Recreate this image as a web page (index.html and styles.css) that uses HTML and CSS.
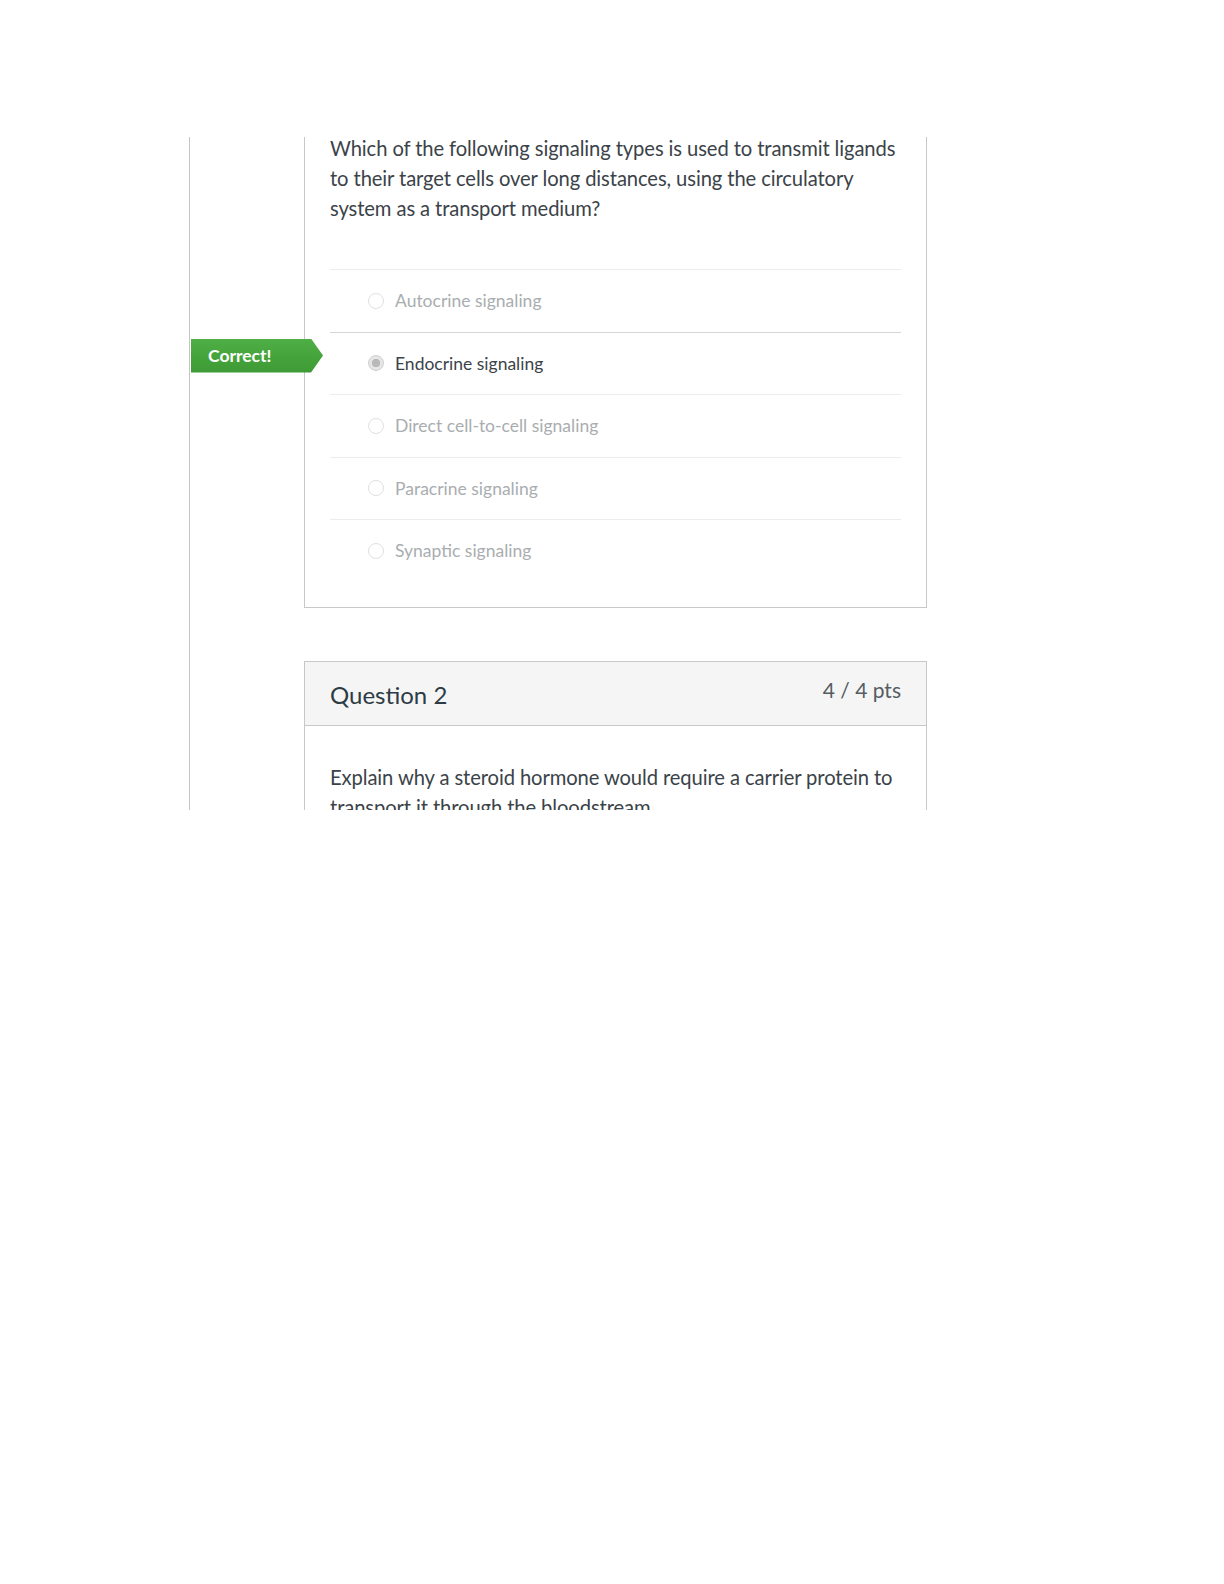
FILE: index.html
```html
<!DOCTYPE html>
<html lang="en">
<head>
  <meta charset="UTF-8" />
  <meta name="viewport" content="width=device-width, initial-scale=1.0"/>
  <title>Quiz Results</title>
  <link rel="stylesheet" href="styles.css">
</head>
<body>
  <div class="frame">
    <div class="gutter"></div>

    <div class="questions">
      <div class="card card-cut">
        <div class="card-body">
          <p class="question-text">Which of the following signaling types is used to transmit ligands to their target cells over long distances, using the circulatory system as a transport medium?</p>

          <ul class="answers">
            <li class="answer"><span class="radio"></span>Autocrine signaling</li>
            <li class="answer answer-correct">
              <span class="badge">Correct!</span>
              <span class="radio radio-checked"></span>Endocrine signaling
            </li>
            <li class="answer"><span class="radio"></span>Direct cell-to-cell signaling</li>
            <li class="answer"><span class="radio"></span>Paracrine signaling</li>
            <li class="answer"><span class="radio"></span>Synaptic signaling</li>
          </ul>
        </div>
      </div>

      <div class="card">
        <div class="card-header">
          <h2>Question 2</h2>
          <span class="pts">4 / 4 pts</span>
        </div>
        <div class="card-body card-body-open">
          <p class="question-text">Explain why a steroid hormone would require a carrier protein to transport it through the bloodstream.</p>
        </div>
      </div>
    </div>
  </div>
</body>
</html>
```

FILE: styles.css
```css
body {
  margin: 0;
  background: #fff;
  font-family: Lato, 'Open Sans', sans-serif;
  color: #3b4349;
}
.frame {
  display: flex;
  width: 737px;
  height: 673px;
  margin: 137px 0 0 189px;
  border-left: 1px solid #c4c4c4;
  overflow: hidden;
}
.gutter {
  width: 114px;
  flex-shrink: 0;
}
.questions {
  width: 623px;
  flex-shrink: 0;
}
.card {
  border: 1px solid #c6c9cc;
  background: #fff;
}
.card-cut {
  border-top: none;
}
.card + .card {
  margin-top: 53px;
}
.card-body {
  padding: 0 25px 25px;
}
.card-body-open {
  padding-top: 36px;
}
.question-text {
  margin: -4px 0 0;
  font-size: 20.2px;
  line-height: 30px;
  letter-spacing: -0.1px;
}
.card-body-open .question-text {
  margin-top: 0;
}
.answers {
  list-style: none;
  margin: 46px 0 0;
  padding: 0;
}
.answer {
  position: relative;
  display: flex;
  align-items: center;
  height: 61.5px;
  padding-left: 38px;
  border-top: 1px solid #ececec;
  font-size: 17.5px;
  color: #a9adb0;
}
.answer-correct {
  border-top-color: #d4d6d8;
  color: #3b4349;
}
.radio {
  width: 14px;
  height: 14px;
  margin-right: 11px;
  border: 1px solid #e0e0e0;
  border-radius: 50%;
  box-sizing: content-box;
  flex-shrink: 0;
}
.radio-checked {
  border-color: #cfcfcf;
  background: radial-gradient(circle, #b9b9b9 0 4px, #e6e6e6 4.5px);
}
.badge {
  position: absolute;
  left: -139px;
  top: 6px;
  width: 132px;
  height: 34px;
  padding-left: 17px;
  box-sizing: border-box;
  display: flex;
  align-items: center;
  font-size: 17.5px;
  font-weight: bold;
  color: #fff;
  background: linear-gradient(to bottom, #4fae45, #3d9a34);
  clip-path: polygon(0 0, calc(100% - 12px) 0, 100% 50%, calc(100% - 12px) 100%, 0 100%);
}
.card-header {
  display: flex;
  justify-content: space-between;
  align-items: flex-start;
  height: 63px;
  padding: 0 25px;
  background: #f5f5f5;
  border-bottom: 1px solid #c6c9cc;
}
.card-header h2 {
  margin: 18px 0 0;
  font-size: 24px;
  font-weight: normal;
  color: #2d3b45;
}
.pts {
  margin-top: 15px;
  font-size: 21px;
  color: #555d63;
}
```
